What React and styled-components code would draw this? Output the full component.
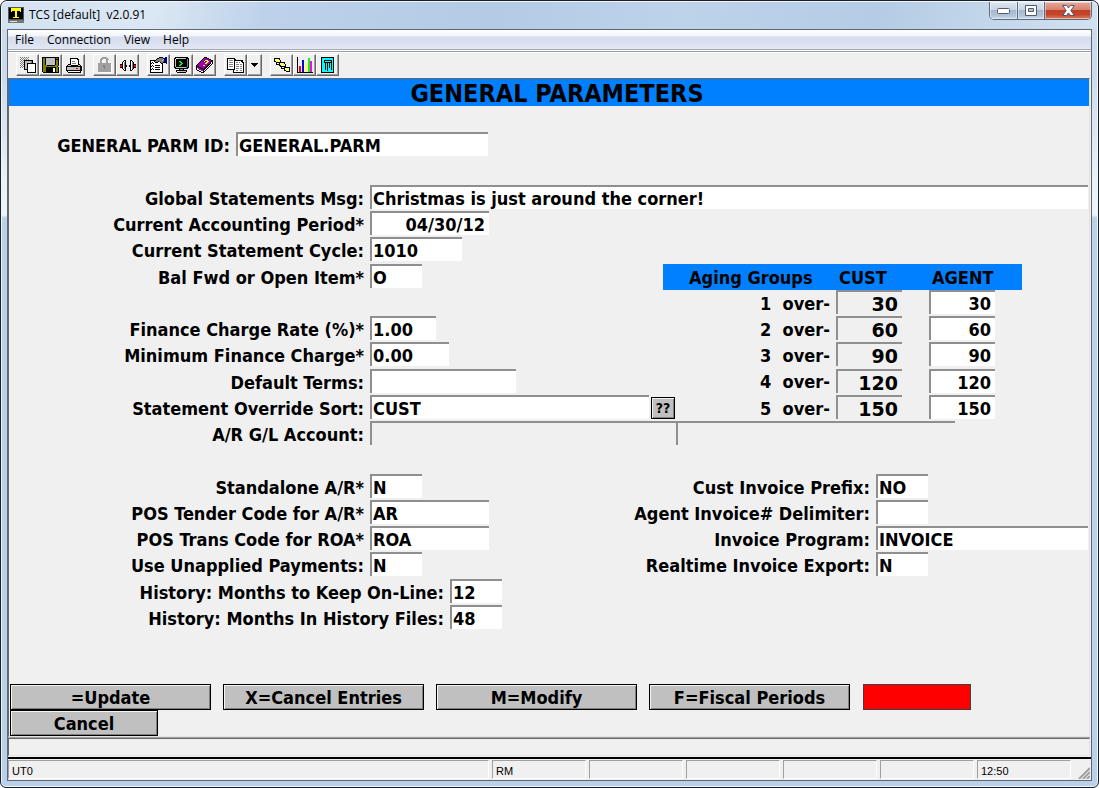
import React from 'react';
import styled, { createGlobalStyle, css } from 'styled-components';

const Global = createGlobalStyle`
  *, *::before, *::after { box-sizing: border-box; }
  html, body, #root { height: 100%; margin: 0; }
  body { background: #fff; color: #000; font: 12px/16px "Open Sans", "Noto Sans", sans-serif; }
  button, input { font: inherit; color: inherit; margin: 0; border-radius: 0; }
`;

const FORM_FONT = 'bold 18px/22px "DejaVu Sans Condensed", "DejaVu Sans", sans-serif';

const Window = styled.div`
  display: flex;
  flex-direction: column;
  min-height: 100%;
  padding: 0 6px 6px;
  border: 1px solid #1b2027;
  border-radius: 7px 7px 6px 6px;
  box-shadow: inset 0 0 0 1px #eef5fc;
  background: linear-gradient(180deg, #cbdcee 0, #cbdaec 70px, #eaf1f8 180px, #eef4fa 214px, #b9d1ea 217px, #b9d1ea 100%);
`;

const Caption = styled.header`
  display: flex;
  align-items: flex-start;
  height: 28px;
  margin: 0 -5px;
  padding: 0 5px;
  background: linear-gradient(100deg, #d3e2f1 0, #dbe7f4 14%, #bdd2ea 24%, #b3cbe5 45%, #bdd3ea 62%, #b4cce5 80%, #d2e1f0 100%);
  border-top: 1px solid #eef5fc;
  border-radius: 6px 6px 0 0;
`;

const CaptionTitle = styled.h1`
  display: flex;
  align-items: center;
  gap: 5px;
  flex: 1;
  margin: 0;
  height: 26px;
  padding-left: 1px;
  font: 12px/16px "Open Sans", "Noto Sans", sans-serif;
  white-space: pre;
`;

const CaptionButtons = styled.div`
  display: flex;
  height: 18px;
  border: 1px solid #5c6b80;
  border-top: 0;
  border-radius: 0 0 5px 5px;
  overflow: hidden;
`;

const CaptionButton = styled.button`
  display: grid;
  place-items: center;
  width: ${(p) => (p.$close ? 47 : 27)}px;
  padding: 0;
  border: 0;
  border-left: ${(p) => (p.$first ? 0 : 1)}px solid #5c6b80;
  box-shadow: inset 0 0 0 1px rgba(255, 255, 255, 0.45);
  background: ${(p) =>
    p.$close
      ? 'linear-gradient(180deg, #e5a99c 0, #d8806c 45%, #c1402a 50%, #c5452c 75%, #dd8465 100%)'
      : 'linear-gradient(180deg, #dbe5f0 0, #c9d6e5 45%, #a7b8cd 50%, #b3c4d8 80%, #cbdcec 100%)'};
`;

const Client = styled.div`
  display: flex;
  flex: 1;
  flex-direction: column;
  border: 1px solid #5f666e;
  background: #f0f0f0;
`;

const MenuBar = styled.nav`
  display: flex;
  height: 19px;
  padding-left: 7px;
  gap: 13px;
  background: linear-gradient(180deg, #fff 0, #f2f4fa 6px, #d6dbed 7px, #e1e6f4 18px);
`;

const MenuItem = styled.button`
  padding: 0;
  border: 0;
  background: none;
  font: 12px/20px "Open Sans", "Noto Sans", sans-serif;
`;

const ToolBar = styled.div`
  display: flex;
  gap: 8px;
  height: 29px;
  padding: 3px 0 0 8px;
  border-top: 1px solid #a6acba;
  box-shadow: inset 0 1px #fff, inset 0 2px #a0a0a0, inset 0 3px #fff;
`;

const ToolGroup = styled.div`
  display: flex;
  padding-top: 1px;
`;

const ToolButton = styled.button`
  display: grid;
  place-items: center;
  width: ${(p) => (p.$narrow ? 15 : 23)}px;
  height: 22px;
  padding: 0;
  border: 1px solid;
  border-color: #fff #696969 #696969 #fff;
  box-shadow: inset -1px -1px #a0a0a0;
  background: #f0f0f0;
  svg { display: block; }
`;

const Screen = styled.main`
  flex: 1;
  display: flex;
  flex-direction: column;
  border-top: 1px solid #696969;
  border-left: 1px solid #696969;
  border-right: 1px solid #e3e3e3;
  border-bottom: 1px solid #e3e3e3;
  margin-right: 1px;
  background: #f0f0f0;
  font: ${FORM_FONT};
`;

const ScreenTitle = styled.h2`
  margin: 0;
  height: 27px;
  padding-left: 16px;
  background: #0080ff;
  text-align: center;
  font: bold 25px/29px "DejaVu Sans Condensed", "DejaVu Sans", sans-serif;
`;

const Form = styled.form`
  flex: 1;
  display: flex;
  flex-direction: column;
  padding-right: 1px;
`;

const Rows = styled.div`
  display: flex;
  flex-direction: column;
  margin-top: ${(p) => p.$before || 0}px;
`;

const Row = styled.div`
  display: flex;
  height: 26px;
`;

const Label = styled.label`
  flex: none;
  width: ${(p) => p.$width}px;
  margin-right: 6px;
  line-height: 28px;
  text-align: right;
  white-space: pre;
`;

const fieldLook = css`
  display: block;
  height: 24px;
  padding: 1px 4px 0 1px;
  border: 0 solid #8f8f8f;
  border-width: 2px 0 0 2px;
  background: ${(p) => (p.readOnly ? '#f0f0f0' : '#fff')};
  text-align: ${(p) => (p.$right ? 'right' : 'left')};
  font: ${FORM_FONT};
  outline: 0;
`;

const Input = styled.input`
  ${fieldLook}
  flex: ${(p) => (p.$width ? 'none' : '1')};
  width: ${(p) => (p.$width ? `${p.$width}px` : 'auto')};
  min-width: 0;
`;

const Columns = styled.div`
  display: flex;
  margin-top: ${(p) => p.$before || 0}px;
`;

const Column = styled.div`
  flex: ${(p) => (p.$width ? 'none' : '1')};
  width: ${(p) => (p.$width ? `${p.$width}px` : 'auto')};
  min-width: 0;
`;

const LookupButton = styled.button`
  flex: none;
  width: 24px;
  height: 22px;
  margin: 2px 0 0 2px;
  padding: 0;
  border: 1px solid #000;
  box-shadow: inset 1px 1px #f0f0f0, inset -1px -1px #808080;
  background: #c0c0c0;
  font: bold 14px/20px "DejaVu Sans Condensed", "DejaVu Sans", sans-serif;
`;

const AgingTable = styled.table`
  width: 359px;
  table-layout: fixed;
  border-collapse: collapse;
  thead { background: #0080ff; }
  th, td { height: 26px; padding: 0; vertical-align: top; }
  tbody + tbody tr:first-child > td { padding-top: 1px; height: 27px; }
`;

const AgingHead = styled.th`
  width: ${(p) => p.$width}px;
  text-align: left;
  text-indent: ${(p) => p.$indent}px;
  && { padding-top: 2px; }
  line-height: 24px;
`;

const AgingLabel = styled.th`
  text-align: right;
  line-height: 24px;
  white-space: pre;
  && { padding: 2px 6px 0 0; }
`;

const AgingInput = styled.input`
  ${fieldLook}
  width: 66px;
  ${(p) => p.readOnly && 'font: bold 19px/22px "DejaVu Sans", sans-serif;'}
`;

const Actions = styled.div`
  display: flex;
  flex-wrap: wrap;
  gap: 0 12px;
  margin-top: auto;
  padding: 53px 0 0 1px;
`;

const Action = styled.button`
  width: ${(p) => p.$width || 201}px;
  height: 26px;
  padding: 2px 0 0;
  border: 1px solid #000;
  box-shadow: inset 1px 1px #f4f4f4, inset -1px -1px #808080;
  background: #c0c0c0;
  font: ${FORM_FONT};
`;

const Alert = styled.div`
  width: 108px;
  height: 26px;
  margin-left: 1px;
  border: 1px solid #404040;
  background: #f00;
`;

const Break = styled.div`
  flex-basis: 100%;
`;

const MessageLine = styled.div`
  height: 18px;
  margin: 1px 1px 1px 0;
  border: 1px solid;
  border-color: #696969 #e3e3e3 #e3e3e3 #696969;
  box-shadow: 0 -1px #a0a0a0;
`;

const StatusBar = styled.footer`
  display: flex;
  gap: 3px;
  height: 23px;
  padding: 1px 8px 0 0;
  border-top: 2px solid #000;
  font: 11px/20px "Liberation Sans", sans-serif;
`;

const Pane = styled.div`
  flex: ${(p) => (p.$grow ? '1' : 'none')};
  width: 94px;
  height: 19px;
  padding-left: 3px;
  border: 1px solid;
  border-color: #a0a0a0 #fff #fff #a0a0a0;
`;

const Grip = styled.svg`
  align-self: flex-end;
  margin: 0 -7px 1px 4px;
`;

const PixelSvg = ({ children, w = 16, h = 16 }) => (
  <svg width={w} height={h} viewBox={`0 0 ${w} ${h}`} shapeRendering="crispEdges" aria-hidden="true">
    {children}
  </svg>
);

const PALETTE = {
  k: '#000', w: '#fff', g: '#808080', s: '#c0c0c0', o: '#808000', y: '#ffff40', r: '#ff0000',
  b: '#000080', B: '#0000ff', m: '#ff00ff', p: '#a000a0', G: '#00ff00', c: '#00ffff', l: '#a0a0a0',
};

const Bitmap = ({ rows }) => (
  <PixelSvg w={Math.max(...rows.map((r) => r.length))} h={rows.length}>
    {rows.flatMap((row, y) =>
      [...row.matchAll(/([^.])\1*/g)].map((run) => (
        <rect key={`${y}-${run.index}`} x={run.index} y={y} width={run[0].length} height="1" fill={PALETTE[run[1]]} />
      ))
    )}
  </PixelSvg>
);

const ICONS = {
  copy: [
    'g.g.g.g.g.......',
    '.g.g.g.g........',
    'g.g.g.g.g.......',
    '.g.gkkkkkkkkk...',
    'g.g.kssssssgk...',
    '.g.gkssssssgk...',
    'g.g.ksskkkkkkkkk',
    '.g.gksskwwwwwwwk',
    'g.g.ksskwwwwwwwk',
    '.g.gksskwwwwwwwk',
    'g.g.ksskwwwwwwwk',
    '....ksskwwwwwwwk',
    '....kkkkwwwwwwwk',
    '.......kwwwwwwwk',
    '.......kwwwwwwwk',
    '.......kkkkkkkkk',
  ],
  save: [
    'kkkkkkkkkkkkkkkkk',
    'kookssssssssskook',
    'kookssssssssskkkk',
    'kookssssssssskook',
    'kookssssssssskook',
    'kookssssssssskook',
    'kookssssssssskook',
    'kookssssssssskook',
    'kooookkkkkkkkoook',
    'kooooooooooooook.',
    'koookkkkkkkkkkook',
    'koookkkkkkkwwkook',
    'koookkkkkkkwwkook',
    'koookkkkkkkwwkook',
    'koookkkkkkkwwkook',
    '.kkkkkkkkkkkkkkkk',
  ],
  print: [
    '....kkkkkkkk....',
    '....kwwwwwwkk...',
    '....kwwwwwwwk...',
    '....kwgggwwwk...',
    '....kwwwwwwwk...',
    '....kwggggwwk...',
    '..kkkwwwwwwwkk..',
    '.kssskkkkkkkssk.',
    'kkkkkkkkkkkkkkkk',
    'kssssssssssssskk',
    'ksssssssssrrsskk',
    'kssssssssssssskk',
    'kkkkkkkkkkkkkkkk',
    '.kwwwwwwwwwwwwk.',
    '..kkkkkkkkkkkkk.',
  ],
  lock: [
    '....lllll....',
    '...lllllll...',
    '..lllwwwlll..',
    '..llw...llw..',
    '..llw...llw..',
    '..llw...llw..',
    'lllllllllllll',
    'lllllllllllllw',
    'lllllggllllllw',
    'lllllggllllllw',
    'llllllgllllllw',
    'llllllgllllllw',
    'lllllllllllllw',
    'lllllllllllllw',
    'lllllllllllllw',
    '.wwwwwwwwwwwww',
  ],
  connect: [
    '....kk....kk....',
    '...kwk....kwk...',
    '..kwgk....kwgk..',
    '..kwgk....kwgk..',
    'kkkwgk....kwgkkk',
    'rrkwgkk..kkwgkrr',
    'rrkwgkk..kkwgkrr',
    'kkkwgk....kwgkkk',
    '..kwgk....kwgk..',
    '...kwk....kwk...',
    '....kk....kk....',
  ],
  props: [
    '.........kkkk..bb',
    '.......kkggggkbbb',
    '......kggggggsbbb',
    'kkkkkkggggggsgbbb',
    'kwwwkgggkgggggbbb',
    'kwkwwkkkwwkggkkbb',
    'kkwkwwwwwwwkk...b',
    'kwwwwwwwwwwwk....',
    'kwkwwkkkkkwwk....',
    'kkwkwwwwwwwwk....',
    'kwwwwkkkkkwwk....',
    'kwkwwwwwwwwwk....',
    'kkwkwkkkkkwwk....',
    'kwwwwwwwwwwwk....',
    'kwwwwwwwwwwwk....',
    'kkkkkkkkkkkkk....',
  ],
  terminal: [
    '.kkkkkkkkkkkkk.',
    'kkwwsssssssskkk',
    'kwkkkkkkkkkkkgk',
    'kskkkkkkkkkkkgk',
    'kskkkGGkkkkkkgk',
    'kskkkkGGkkkkkgk',
    'kskkkkkGGkkkkgk',
    'kskkkkGGkkkkkgk',
    'kskkkGGkkkkkkgk',
    'kskkkkkkkkkkkgk',
    'kkssssssssssgkk',
    '.kkkkkkkkkkkkk.',
    '.....kgggk.....',
    '..kkkkkkkkkkk..',
    '..kwwsssssssk..',
    '...kkkkkkkkk...',
  ],
  help: [
    '........kkk......',
    '.......kpppkk....',
    '......kppppppkk..',
    '.....kpppyyypppkk',
    '....kpppyppyyppkk',
    '...kppppppyyppkwk',
    '..kppppppyypppkwk',
    '.kppppppppppkkwk.',
    'kppppppyyppkkwk..',
    'kkkpppppppkkwk...',
    'kppkkppppkkwk....',
    'kwppkkkpkkwk.....',
    'kwwppppkkwk......',
    '.kkwwppkwk.......',
    '...kkwwkk........',
    '.....kkk.........',
  ],
  pages: [
    'kkkkkkkk.........',
    'kwwwwwwkk........',
    'kwggggwkkkkkkkkk.',
    'kwwwwwwkwwwwwwkk.',
    'kwggggwkwggwgwwkk',
    'kwwwwwwkwwwwwwwwk',
    'kwggggwkwgggwggwk',
    'kwwwwwwkwwwwwwwwk',
    'kwggggwkwgggwggwk',
    'kwwwwwwkwwwwwwwwk',
    'kwwwwwwkwgggwggwk',
    'kkkkkkkkwwwwwwwwk',
    '......kwwggwwggwk',
    '......kwwwwwwwwwk',
    '......kkkkkkkkkkk',
  ],
  arrow: ['kkkkkkk', '.kkkkk.', '..kkk..', '...k...'],
  nodes: [
    'kkkkkk..........',
    'kywyyk..........',
    'kyywyyk.........',
    'kkyywyk.........',
    '..kkkkkkkkk.....',
    '..k..kywyyk.....',
    '..kkkkyywyyk....',
    '.....kkyywyk....',
    '......kkkkkk....',
    '.......k..kkkkkk',
    '.......kkkkywyyk',
    '..........kyywyk',
    '..........kkyywk',
    '............kkkk',
  ],
  chart: [
    'k...............',
    'k..........GG...',
    'k..........GG...',
    'k....BB....GG...',
    'k....BB....GGmm.',
    'k....BB....GGmm.',
    'k....BB.yy.GGmm.',
    'k....BB.yy.GGmm.',
    'k....BB.yy.GGmm.',
    'k.rr.BB.yy.GGmm.',
    'k.rr.BB.yy.GGmm.',
    'k.rr.BB.yy.GGmm.',
    'k.rr.BB.yy.GGmm.',
    'k.rr.BB.yy.GGmm.',
    'k.rr.BB.yy.GGmm.',
    'kkkkkkkkkkkkkkkk',
  ],
  calc: [
    'kkkkkkkkkkkkk',
    'kccccccccccck',
    'kccccccccccck',
    'kcckkkkkkkkck',
    'kcckcccccckck',
    'kcckkkkkkkkck',
    'kccckckckckck',
    'kccckckckckck',
    'kccckckckckck',
    'kccckckckckck',
    'kccckckckckck',
    'kccckckccckck',
    'kccckckccckck',
    'kccccckccccck',
    'kccccccccccck',
    'kkkkkkkkkkkkk',
  ],
};

const TOOLS = [
  [['Copy', 'copy'], ['Save', 'save'], ['Print', 'print']],
  [['Lock', 'lock'], ['Connect', 'connect']],
  [['Properties', 'props'], ['Terminal', 'terminal'], ['Help', 'help']],
  [['Pages', 'pages'], ['More pages', 'arrow']],
  [['Network', 'nodes'], ['Chart', 'chart'], ['Calculator', 'calc']],
];

const Field = ({ id, label, labelWidth = 355, value = '', width, right, readOnly, children }) => (
  <Row>
    <Label htmlFor={id} $width={labelWidth}>{label}</Label>
    <Input id={id} defaultValue={value} $width={width} $right={right} readOnly={readOnly} />
    {children}
  </Row>
);

const AgingRow = ({ index, days }) => (
  <tr>
    <AgingLabel scope="row">{`${index}  over-`}</AgingLabel>
    <td><AgingInput aria-label={`Customer group ${index}`} defaultValue={days} readOnly $right /></td>
    <td><AgingInput aria-label={`Agent group ${index}`} defaultValue={days} $right /></td>
  </tr>
);

export default function App() {
  return (
    <>
      <Global />
      <Window>
        <Caption>
          <CaptionTitle>
            <PixelSvg>
              <rect width="16" height="13" fill="#555" />
              <rect x="1" y="1" width="14" height="11" fill="#000" />
              <path d="M3 1h10v4h-1v-1h-3v6h2v1H5v-1h2V4H4v1H3z" fill="#ff0" />
              <rect x="0" y="13" width="16" height="3" fill="#777" />
              <rect x="2" y="14" width="7" height="1" fill="#ddd" />
            </PixelSvg>
            {'TCS [default]  v2.0.91'}
          </CaptionTitle>
          <CaptionButtons>
            <CaptionButton $first aria-label="Minimize">
              <svg width="13" height="6"><rect x=".5" y=".5" width="12" height="5" rx="1" fill="#fff" stroke="#535a6b" /></svg>
            </CaptionButton>
            <CaptionButton aria-label="Maximize">
              <svg width="12" height="11"><path d="M.5 .5h11v10H.5z" fill="#fff" stroke="#535a6b" /><path d="M3.5 3.5h5v3h-5z" fill="#b5c5d8" stroke="#535a6b" /></svg>
            </CaptionButton>
            <CaptionButton $close aria-label="Close">
              <svg width="13" height="11"><path d="M.7.5h3.8l2 2.4 2-2.4h3.8L8.9 5.5l3.4 5H8.5l-2-2.6-2 2.6H.7l3.4-5z" fill="#fff" stroke="#535666" /></svg>
            </CaptionButton>
          </CaptionButtons>
        </Caption>

        <Client>
          <MenuBar aria-label="Main menu">
            {['File', 'Connection', 'View', 'Help'].map((name) => <MenuItem key={name}>{name}</MenuItem>)}
          </MenuBar>
          <ToolBar role="toolbar">
            {TOOLS.map((group, i) => (
              <ToolGroup key={i}>
                {group.map(([name, icon]) => (
                  <ToolButton key={name} aria-label={name} $narrow={icon === 'arrow'}>
                    <Bitmap rows={ICONS[icon]} />
                  </ToolButton>
                ))}
              </ToolGroup>
            ))}
          </ToolBar>

          <Screen>
            <ScreenTitle>GENERAL PARAMETERS</ScreenTitle>
            <Form onSubmit={(e) => e.preventDefault()}>
              <Rows $before={26}>
                <Field id="parm" label="GENERAL PARM ID:" labelWidth={221} value="GENERAL.PARM" width={252} />
              </Rows>
              <Rows $before={27}>
                <Field id="msg" label="Global Statements Msg:" value="Christmas is just around the corner!" />
                <Field id="period" label="Current Accounting Period*" value="04/30/12" width={119} right />
                <Field id="cycle" label="Current Statement Cycle:" value="1010" width={92} />
              </Rows>
              <Columns $before={1}>
                <Column $width={654}>
                  <Field id="balance" label="Bal Fwd or Open Item*" value="O" width={52} />
                  <Rows $before={26}>
                    <Field id="rate" label="Finance Charge Rate (%)*" value="1.00" width={66} />
                    <Field id="minimum" label="Minimum Finance Charge*" value="0.00" width={79} />
                  </Rows>
                  <Rows $before={1}>
                    <Field id="terms" label="Default Terms:" width={146} />
                    <Field id="sort" label="Statement Override Sort:" value="CUST" width={279}>
                      <LookupButton type="button" aria-label="Look up sort">??</LookupButton>
                    </Field>
                  </Rows>
                </Column>
                <AgingTable>
                  <thead>
                    <tr>
                      <AgingHead scope="col" $width={173} $indent={26}>Aging Groups</AgingHead>
                      <AgingHead scope="col" $width={93} $indent={3}>CUST</AgingHead>
                      <AgingHead scope="col" $width={93} $indent={3}>AGENT</AgingHead>
                    </tr>
                  </thead>
                  <tbody>
                    <AgingRow index={1} days="30" />
                    <AgingRow index={2} days="60" />
                    <AgingRow index={3} days="90" />
                  </tbody>
                  <tbody>
                    <AgingRow index={4} days="120" />
                    <AgingRow index={5} days="150" />
                  </tbody>
                </AgingTable>
              </Columns>
              <Field id="account" label="A/R G/L Account:" width={306} readOnly>
                <Input aria-label="Account name" readOnly $width={279} />
              </Field>
              <Columns $before={27}>
                <Column $width={600}>
                  <Field id="standalone" label="Standalone A/R*" value="N" width={52} />
                  <Field id="tender" label="POS Tender Code for A/R*" value="AR" width={119} />
                  <Field id="trans" label="POS Trans Code for ROA*" value="ROA" width={119} />
                  <Field id="unapplied" label="Use Unapplied Payments:" value="N" width={52} />
                </Column>
                <Column>
                  <Field id="prefix" label="Cust Invoice Prefix:" labelWidth={261} value="NO" width={52} />
                  <Field id="delimiter" label="Agent Invoice# Delimiter:" labelWidth={261} width={52} />
                  <Field id="program" label="Invoice Program:" labelWidth={261} value="INVOICE" />
                  <Field id="export" label="Realtime Invoice Export:" labelWidth={261} value="N" width={52} />
                </Column>
              </Columns>
              <Rows $before={1}>
                <Field id="online" label="History: Months to Keep On-Line:" labelWidth={435} value="12" width={52} />
                <Field id="files" label="History: Months In History Files:" labelWidth={435} value="48" width={52} />
              </Rows>
              <Actions>
                <Action type="button">=Update</Action>
                <Action type="button">X=Cancel Entries</Action>
                <Action type="button">M=Modify</Action>
                <Action type="button">F=Fiscal Periods</Action>
                <Alert />
                <Break />
                <Action type="button" $width={148}>Cancel</Action>
              </Actions>
            </Form>
          </Screen>

          <MessageLine />
          <StatusBar>
            <Pane $grow>UT0</Pane>
            <Pane>RM</Pane>
            <Pane />
            <Pane />
            <Pane />
            <Pane />
            <Pane>12:50</Pane>
            <Grip width="12" height="12" aria-hidden="true">
              <path d="M1 12 12 1M5 12l7-7M9 12l3-3" stroke="#a0a0a0" strokeWidth="2" />
            </Grip>
          </StatusBar>
        </Client>
      </Window>
    </>
  );
}
